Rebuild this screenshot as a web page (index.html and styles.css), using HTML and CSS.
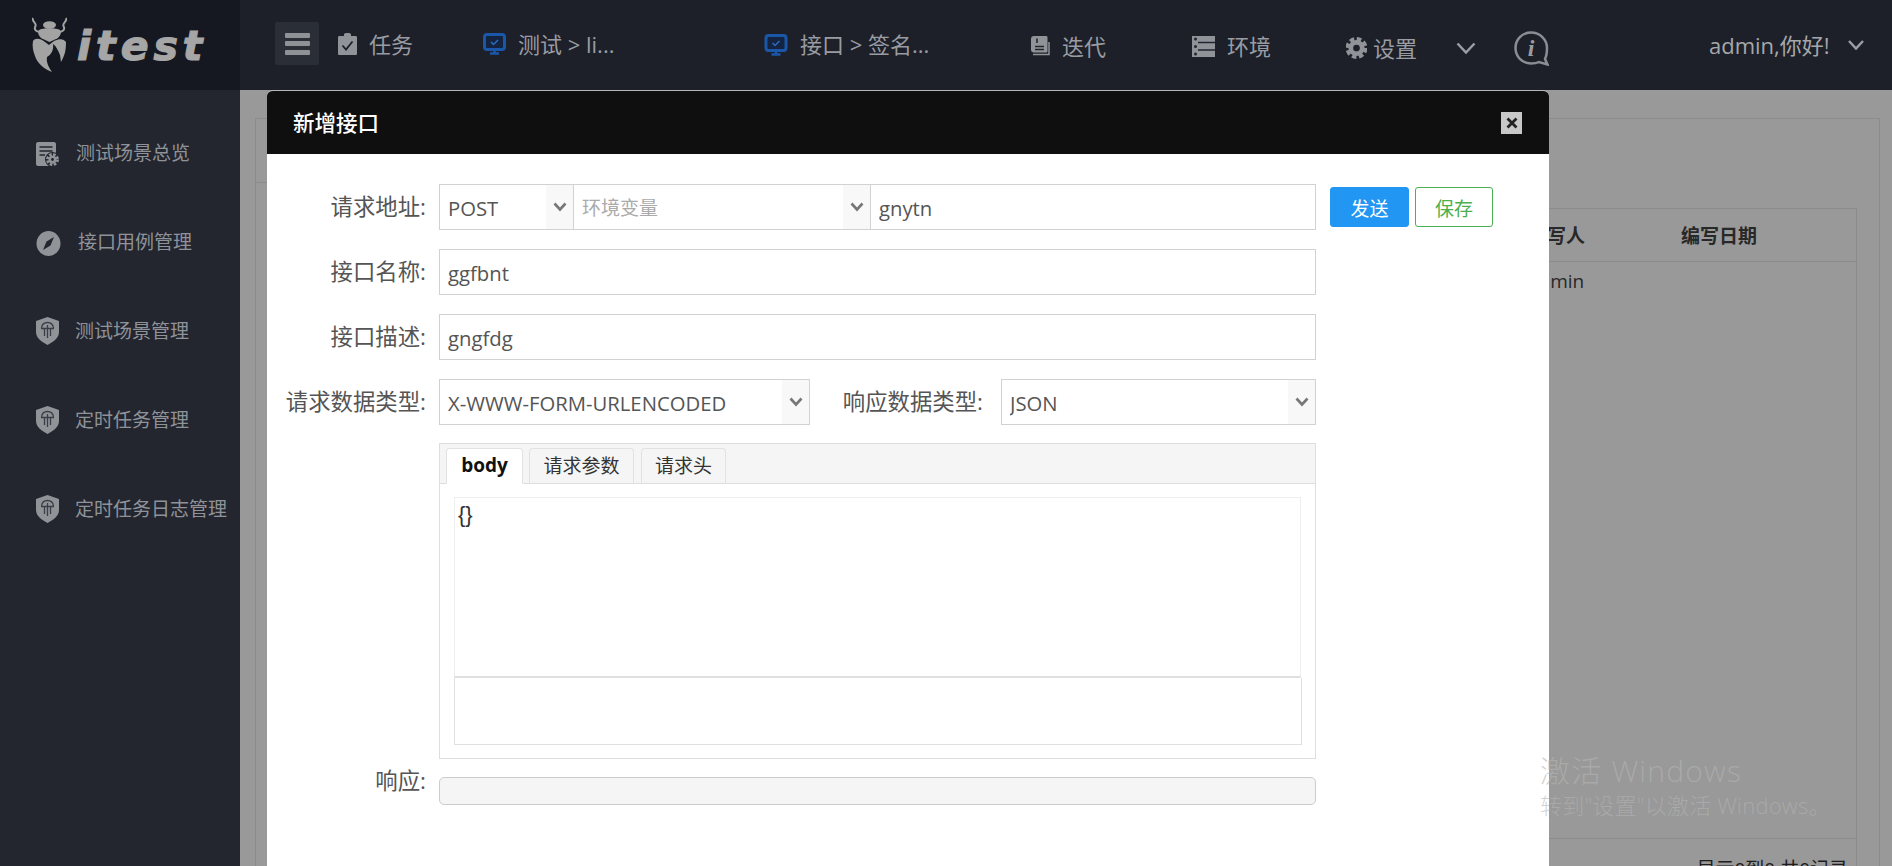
FILE: index.html
```html
<!DOCTYPE html>
<html lang="zh-CN">
<head>
<meta charset="utf-8">
<title>itest</title>
<link rel="stylesheet" href="styles.css">
</head>
<body>
<div class="app">
  <header class="topbar">
    <div class="logo">
      <svg class="logo-bug" viewBox="0 0 35 56" width="35" height="56" aria-hidden="true">
        <path class="bug-line" d="M1 1C-1 4 5 6 3.500 9C2 12 3 14 7 15M34 1C36 4 30 6 31.500 9C33 12 32 14 28 15"/>
        <ellipse class="bug-fill" cx="17.500" cy="8" rx="6.500" ry="3.800"/>
        <path class="bug-fill" d="M7 13C10 10.500 25 10.500 28 13C30 16 28 20 24 22L17.500 25L11 22C7 20 5 16 7 13Z"/>
        <path class="bug-fill" d="M1 24C3 21 8 21 13 25L17 28L22 24C28 21 32 22 34 25C34 33 33 38 29 45L28 38C26 33 24 29 21 27C22 33 19 38 15 40C14 46 17 50 20 55C12 52 5 46 3 39C1 34 0 29 1 24Z"/>
      </svg>
      <span class="logo-text">itest</span>
    </div>
    <button class="menu-btn" aria-label="menu"><span></span><span></span><span></span></button>
    <nav class="nav">
      <div class="nav-item up2">
        <svg class="ico" width="19" height="22" viewBox="0 0 19 22"><path class="g" d="M1.500 3H6V1.500C6 .5 7 0 9.500 0S13 .5 13 1.500V3H17.500C18.500 3 19 3.500 19 4.500V20.500C19 21.500 18.500 22 17.500 22H1.500C.5 22 0 21.500 0 20.500V4.500C0 3.500 .5 3 1.500 3Z"/><path class="cut" d="M4.500 12.500L8 16.500L14.500 8.500"/></svg>
        <span>任务</span>
      </div>
      <div class="nav-item up2">
        <svg class="ico" width="23" height="22" viewBox="0 0 23 22"><rect class="mon" x="1.500" y="1.500" width="20" height="15" rx="2.500"/><path class="mon-base" d="M7 20.500H16M11.500 17V20"/><path class="mon-check" d="M8 9L10.500 11.500L15 7"/></svg>
        <span>测试 &gt; li...</span>
      </div>
      <div class="nav-item api">
        <svg class="ico" width="24" height="22" viewBox="0 0 23 22"><rect class="mon" x="1.500" y="1.500" width="20" height="15" rx="2.500"/><path class="mon-base" d="M7 20.500H16M11.500 17V20"/><path class="mon-check" d="M8 9L10.500 11.500L15 7"/></svg>
        <span>接口 &gt; 签名...</span>
      </div>
      <div class="nav-item down2">
        <svg class="ico" width="19" height="20" viewBox="0 0 19 20"><path class="g" d="M3 0H15C16 0 16.500 .5 16.500 1.500V15C16.500 16 16 16.500 15 16.500H3C1 16.500 0 15.500 0 13.500V3C0 1 1 0 3 0Z"/><path class="cut-thin" d="M4 10.500H13M4 13.500H13M6 2.500V7"/><path class="g-line" d="M2 18.500H18V6"/></svg>
        <span>迭代</span>
      </div>
      <div class="nav-item down2">
        <svg class="ico" width="23" height="21" viewBox="0 0 23 21"><rect class="g" width="23" height="21"/><path class="cut-thin" d="M6 6.500H23M6 14H23"/><circle class="dot" cx="3.500" cy="3" r="1.500"/><circle class="dot" cx="3.500" cy="10.500" r="1.500"/><circle class="dot" cx="3.500" cy="18" r="1.500"/></svg>
        <span>环境</span>
      </div>
      <div class="nav-item down6 tight">
        <svg class="ico" width="21" height="22" viewBox="0 0 22 22"><circle class="gear-teeth" cx="11" cy="11" r="9"/><circle class="gear-ring" cx="11" cy="11" r="6"/></svg>
        <span>设置</span>
      </div>
      <div class="nav-item down4">
        <svg width="20" height="12" viewBox="0 0 20 12"><path class="chev" d="M1.500 1.500L10 10.500L18.500 1.500"/></svg>
      </div>
      <div class="nav-item down4">
        <svg width="35" height="35" viewBox="0 0 35 35"><path class="bubble" d="M17 1.500C8 1.500 1.500 8.500 1.500 17S8 32.500 17 32.500C20 32.500 23 32 25 31L33.500 33.500L31 28C32.500 25 33 21 33 17C33 8.500 26 1.500 17 1.500Z"/><text class="info-i" x="17" y="25" text-anchor="middle">i</text></svg>
      </div>
      <div class="nav-item user">
        <span>admin,你好!</span>
        <svg width="16" height="10" viewBox="0 0 16 10"><path class="chev" d="M1 1L8 8.500L15 1"/></svg>
      </div>
    </nav>
  </header>

  <div class="below">
    <aside class="sidebar">
      <a class="side-item">
        <svg class="side-ico s-doc" width="24" height="25" viewBox="0 0 24 25"><path class="g" d="M2 0H18C19 0 20 1 20 2V24H2C1 24 0 23 0 22V2C0 1 1 0 2 0Z"/><path class="cut-thin" d="M3.500 5H16.500M3.500 9H16.500M3.500 13H9"/><circle class="gear-back" cx="16.500" cy="17.500" r="7.500"/><circle class="gear-teeth small" cx="16.500" cy="17.500" r="5"/><circle class="gear-hole" cx="16.500" cy="17.500" r="2.700"/></svg>
        <span>测试场景总览</span>
      </a>
      <a class="side-item">
        <svg class="side-ico s-comp" width="25" height="25" viewBox="0 0 25 25"><ellipse class="g" cx="12.500" cy="12.500" rx="12" ry="12.500"/><path class="needle" d="M18 6L14.500 14.500L7 19L10.500 10.500Z"/></svg>
        <span>接口用例管理</span>
      </a>
      <a class="side-item">
        <svg class="side-ico s-shield" width="23" height="28" viewBox="0 0 23 28"><path class="g" d="M11.500 0L23 4V15C23 21 17 25 11.500 28C6 25 0 21 0 15V4Z"/><path class="shield-mark" d="M5.500 11C6 7 8.500 5.500 11.500 5.500S17 7 17.500 11M5 11.500H18M8.500 11.500V19M11.500 8V21M14.500 11.500V19"/></svg>
        <span>测试场景管理</span>
      </a>
      <a class="side-item">
        <svg class="side-ico s-shield" width="23" height="28" viewBox="0 0 23 28"><path class="g" d="M11.500 0L23 4V15C23 21 17 25 11.500 28C6 25 0 21 0 15V4Z"/><path class="shield-mark" d="M5.500 11C6 7 8.500 5.500 11.500 5.500S17 7 17.500 11M5 11.500H18M8.500 11.500V19M11.500 8V21M14.500 11.500V19"/></svg>
        <span>定时任务管理</span>
      </a>
      <a class="side-item">
        <svg class="side-ico s-shield" width="23" height="28" viewBox="0 0 23 28"><path class="g" d="M11.500 0L23 4V15C23 21 17 25 11.500 28C6 25 0 21 0 15V4Z"/><path class="shield-mark" d="M5.500 11C6 7 8.500 5.500 11.500 5.500S17 7 17.500 11M5 11.500H18M8.500 11.500V19M11.500 8V21M14.500 11.500V19"/></svg>
        <span>定时任务日志管理</span>
      </a>
    </aside>

    <main class="content">
      <section class="card">
        <div class="card-title"></div>
        <div class="table">
          <div class="t-row t-head"><span></span><span>编写人</span><span>编写日期</span></div>
          <div class="t-row"><span></span><span>admin</span><span></span></div>
          <div class="t-foot"><span>显示0到0,共0记录</span></div>
        </div>
      </section>
      <div class="backdrop"></div>
    </main>
  </div>

  <div class="modal">
    <div class="modal-head">
      <h2>新增接口</h2>
      <button class="close" aria-label="close">
        <svg width="12" height="12" viewBox="0 0 12 12"><path d="M1.500 1.500L10.500 10.500M10.500 1.500L1.500 10.500"/></svg>
      </button>
    </div>
    <form class="modal-body">
      <div class="row">
        <label class="label">请求地址:</label>
        <div class="url-group">
          <div class="select s-method"><select><option>POST</option></select><span class="arrow"><svg width="14" height="10" viewBox="0 0 14 10"><path d="M1.500 1.500L7 7.500L12.500 1.500"/></svg></span></div>
          <div class="select s-env"><select class="muted"><option>环境变量</option></select><span class="arrow"><svg width="14" height="10" viewBox="0 0 14 10"><path d="M1.500 1.500L7 7.500L12.500 1.500"/></svg></span></div>
          <input class="input s-url" value="gnytn">
        </div>
        <button type="button" class="btn btn-send">发送</button>
        <button type="button" class="btn btn-save">保存</button>
      </div>
      <div class="row">
        <label class="label">接口名称:</label>
        <input class="input s-full" value="ggfbnt">
      </div>
      <div class="row">
        <label class="label">接口描述:</label>
        <input class="input s-full" value="gngfdg">
      </div>
      <div class="row">
        <label class="label">请求数据类型:</label>
        <div class="select s-req"><select><option>X-WWW-FORM-URLENCODED</option></select><span class="arrow"><svg width="14" height="10" viewBox="0 0 14 10"><path d="M1.500 1.500L7 7.500L12.500 1.500"/></svg></span></div>
        <label class="label label-2">响应数据类型:</label>
        <div class="select s-res"><select><option>JSON</option></select><span class="arrow"><svg width="14" height="10" viewBox="0 0 14 10"><path d="M1.500 1.500L7 7.500L12.500 1.500"/></svg></span></div>
      </div>
      <div class="panel">
        <div class="tabs">
          <span class="tab active">body</span>
          <span class="tab t-params">请求参数</span>
          <span class="tab t-headers">请求头</span>
        </div>
        <div class="panel-body">
          <div class="editor">{}</div>
          <div class="editor-2"></div>
        </div>
      </div>
      <div class="row-resp">
        <label class="label">响应:</label>
        <div class="resp"></div>
      </div>
    </form>
  </div>

  <div class="watermark">
    <div class="wm-1">激活 Windows</div>
    <div class="wm-2">转到"设置"以激活 Windows。</div>
  </div>
</div>
</body>
</html>
```
FILE: styles.css
```css
* { box-sizing: border-box; }
html, body { margin: 0; height: 100%; overflow: hidden; }
body {
  font-family: "Open Sans", "Noto Sans CJK SC", sans-serif;
  background: #f3f3f4;
  color: #555;
}
.app { position: relative; width: 1892px; height: 866px; overflow: hidden; }

/* top bar */
.topbar { display: flex; align-items: center; height: 90px; background: #1d2029; }
.logo {
  display: flex; align-items: flex-start; width: 240px; height: 90px;
  padding: 17px 0 0 32px; background: #161821; flex: none;
}
.logo-bug { flex: none; }
.bug-fill { fill: #a3a3a3; }
.bug-line { fill: none; stroke: #a3a3a3; stroke-width: 2; }
.logo-text {
  margin: 5px 0 0 10px; font-family: "DejaVu Sans", sans-serif; font-weight: 700; font-style: italic;
  font-size: 41px; line-height: 48px; letter-spacing: 5px; color: #a6a6a6;
  -webkit-text-stroke: 1.200px #a6a6a6;
}
.menu-btn {
  display: flex; flex-direction: column; justify-content: center; gap: 3.500px;
  width: 44px; height: 43px; margin: 0 19px 3px 35px; padding: 0 9.500px;
  border: 0; border-radius: 2px; background: #2a2e36; flex: none;
}
.menu-btn span { display: block; height: 5px; background: #8e9196; border-radius: 1px; }
.nav {
  display: grid; flex: 1; height: 90px;
  grid-template-columns: 145px 281px 267px 161px 154px 110px 58px 195px 1fr;
  font-size: 22px; color: #999ca2;
}
.nav-item { display: flex; align-items: center; gap: 12px; white-space: nowrap; }
.nav-item span { margin-top: -2px; }
.nav-item.api span { margin-top: -4px; }
.nav-item.up2 { padding-bottom: 2px; }
.nav-item.down2 { padding-top: 2px; }
.nav-item.down4 { padding-top: 6px; }
.nav-item.down6 { padding-top: 6px; }
.nav-item.tight { gap: 6px; }
.nav-item.user { gap: 18px; color: #a5a7ab; }
.ico { flex: none; }
.g { fill: #909398; }
.g-line { fill: none; stroke: #909398; stroke-width: 1.500; }
.dot { fill: #23262f; }
.cut { fill: none; stroke: #1d2029; stroke-width: 1.800; }
.cut-thin { fill: none; stroke: #23262f; stroke-width: 1.600; }
.mon { fill: #14233f; stroke: #1a57a8; stroke-width: 3; }
.mon-base { fill: none; stroke: #1a57a8; stroke-width: 2.500; }
.mon-check { fill: none; stroke: #2a6cc0; stroke-width: 1.500; }
.gear-teeth { fill: none; stroke: #909398; stroke-width: 5; stroke-dasharray: 4.500 2.570; }
.gear-teeth.small { stroke-width: 3; stroke-dasharray: 2.500 1.430; }
.gear-back { fill: #23262f; }
.gear-ring { fill: none; stroke: #909398; stroke-width: 5; }
.gear-hole { fill: none; stroke: #909398; stroke-width: 2.500; }
.chev { fill: none; stroke: #9a9da3; stroke-width: 2.500; }
.bubble { fill: none; stroke: #8a8d93; stroke-width: 2.500; }
.info-i { font-family: "Liberation Serif", serif; font-style: italic; font-weight: 700; font-size: 24px; fill: #9a9da3; }

/* body frame */
.below { display: flex; height: 776px; }
.sidebar { width: 240px; flex: none; padding-top: 17px; background: #23262f; }
.side-item {
  display: flex; align-items: center; height: 89px; padding-left: 36px;
  font-size: 19px; color: #8f9399; white-space: nowrap;
}
.side-ico { flex: none; }
.s-doc { margin-right: 16px; margin-top: 5px; }
.s-comp { margin-right: 17px; margin-top: 5px; }
.s-shield { margin-right: 16px; margin-top: 3px; }
.needle { fill: #23262f; }
.shield-mark { fill: none; stroke: #3b3e47; stroke-width: 1.300; }

/* page behind the dialog */
.content { position: relative; flex: 1; padding: 28px 12px 0 15px; background: #fff; }
.backdrop { position: absolute; inset: 0; background: rgba(0, 0, 0, .4); }
.card { height: 760px; padding: 0 22px 0 22px; background: #fff; border: 1px solid #e7eaec; }
.card-title { width: 60px; height: 64px; margin: 0 0 25px -22px; border-bottom: 1px solid #e7eaec; }
.table { height: 700px; border: 1px solid #e7eaec; border-bottom: 0; font-size: 19px; color: #444; }
.t-row {
  display: grid; grid-template-columns: 1249px 153px 1fr; align-items: center; height: 53px; padding-bottom: 2px;
}
.t-head { font-weight: 700; border-bottom: 1px solid #e7eaec; font-family: "Noto Sans CJK SC", sans-serif; }
.t-head + .t-row { height: 40px; }
.t-foot {
  display: flex; justify-content: flex-end; margin-top: 536px; padding: 17px 8px 0 0;
  border-top: 1px solid #e7eaec; font-size: 19px; line-height: 26px; color: #333;
}

/* dialog */
.modal {
  position: absolute; left: 267px; top: 90px; width: 1282px; height: 800px;
  background: #fff; border-top: 1px solid #b5b5b5; border-radius: 6px 6px 0 0; overflow: hidden;
}
.modal-head {
  display: flex; align-items: center; justify-content: space-between;
  height: 63px; padding: 0 27px 0 26px; background: #0f0f10;
}
.modal-head h2 {
  margin: -2px 0 0; font-size: 21.500px; font-weight: 500; color: #fff;
  font-family: "Noto Sans CJK SC", sans-serif;
}
.close {
  display: flex; align-items: center; justify-content: center;
  width: 21px; height: 22px; padding: 0; border: 0; background: #c8c8c8;
}
.close path { fill: none; stroke: #222; stroke-width: 2.800; }
.modal-body { display: flex; flex-direction: column; gap: 19px; padding-top: 30px; }
.row { display: flex; align-items: center; height: 46px; }
.label {
  width: 172px; padding-right: 13px; flex: none; text-align: right;
  font-size: 22.400px; line-height: 28px; color: #555; white-space: nowrap;
}
.label-2 { width: 191px; padding-right: 18px; }
.input, .select {
  height: 46px; border: 1.500px solid #d2d2d2; background: #fff;
  font: inherit; font-size: 20.300px; color: #555;
}
.input { padding: 2px 8px 0; outline: 0; }
.select { position: relative; flex: none; }
.select select {
  display: block; width: 100%; height: 100%; padding: 2px 0 0 8px; border: 0; outline: 0;
  appearance: none; -webkit-appearance: none; background: transparent;
  font: inherit; color: inherit;
}
.select .muted { color: #aaa; font-size: 19px; }
.arrow {
  position: absolute; top: 0; right: 0; bottom: 0; width: 27px;
  display: flex; align-items: center; justify-content: center; background: #f8f8f8;
  pointer-events: none;
}
.arrow path { fill: none; stroke: #777; stroke-width: 2.600; }
.url-group { display: flex; width: 877px; flex: none; }
.s-method { width: 135px; }
.s-env { width: 298px; margin-left: -1px; }
.s-url { width: 446px; margin-left: -1px; }
.s-full { width: 877px; flex: none; }
.s-req { width: 371px; }
.s-res { width: 315px; }
.btn {
  height: 40px; padding: 0; border-radius: 3px; font: inherit; font-size: 19px;
  font-family: "Noto Sans CJK SC", sans-serif;
}
.btn-send { width: 79px; margin-left: 14px; border: 1px solid #2196f3; background: #2196f3; color: #fff; }
.btn-save { width: 78px; margin-left: 6px; border: 1px solid #4caf50; background: #fff; color: #4caf50; }
.panel { width: 877px; height: 316px; margin: -1px 0 0 172px; border: 1px solid #dedede; }
.tabs {
  display: flex; align-items: flex-end; gap: 6px; height: 40px; padding-left: 6px;
  background: #f5f5f5; border-bottom: 1px solid #dedede;
}
.tab {
  display: flex; align-items: center; justify-content: center; height: 36px; margin-bottom: -1px;
  padding-bottom: 2px; border: 1px solid #e2e2e2; border-bottom-color: #dedede; border-radius: 4px 4px 0 0;
  font-size: 19px; color: #333; background: #f5f5f5;
}
.tab.active {
  width: 77px; background: #fff; border-color: #e2e2e2; border-bottom-color: #fff;
  font-weight: 700; color: #111;
}
.t-params { width: 105px; }
.t-headers { width: 85px; margin-left: 1px; }
.panel-body { padding: 13px 14px 0; }
.editor {
  width: 847px; height: 181px; padding: 1px 3px; border: 1px solid #eee; border-bottom: 2px solid #e0e0e0;
  font-family: "Liberation Sans", sans-serif; font-size: 22px; line-height: 32px; color: #333;
}
.editor-2 { width: 848px; height: 67px; border: 1px solid #e0e0e0; border-top: 0; }
.row-resp { display: flex; align-items: flex-start; margin-top: -9px; }
.row-resp .label { margin-top: -2px; }
.resp {
  width: 877px; height: 28px; margin-top: 8px; border: 1px solid #ccc; border-radius: 5px; background: #f5f5f5;
}

/* OS activation notice, above everything */
.watermark {
  position: absolute; left: 1540px; top: 751px; color: rgba(180, 180, 180, .6);
  font-family: "Open Sans", "Noto Sans CJK SC", sans-serif; font-weight: 300; white-space: nowrap; pointer-events: none;
}
.wm-1 { font-size: 30px; line-height: 40px; letter-spacing: 1.200px; }
.wm-2 { font-size: 22px; line-height: 28px; letter-spacing: .2px; }
```
